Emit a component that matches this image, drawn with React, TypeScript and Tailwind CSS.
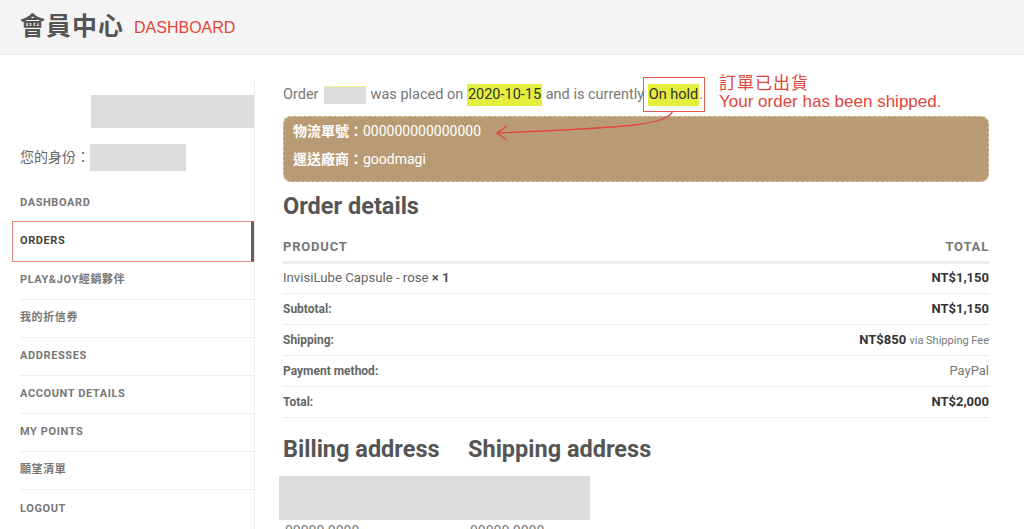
import React from "react";

const navItems = [
  "DASHBOARD",
  "ORDERS",
  "PLAY&JOY經銷夥伴",
  "我的折信券",
  "ADDRESSES",
  "ACCOUNT DETAILS",
  "MY POINTS",
  "願望清單",
  "LOGOUT",
];

const font = { fontFamily: 'Roboto, "Noto Sans CJK TC", sans-serif' };

export default function App() {
  return (
    <div className="w-[1024px] h-[529px] overflow-hidden bg-white text-[#777]" style={font}>
      <header className="h-[55px] bg-[#f5f4f4] border-b border-[#ebebeb] flex items-center pl-[20px]">
        <span className="text-[25px] font-bold text-[#555] tracking-[1px]">會員中心</span>
        <span className="ml-[10px] text-[16px] text-[#e0463a] mt-[1px]" style={{ fontFamily: '"Liberation Sans", sans-serif' }}>DASHBOARD</span>
      </header>
      <div className="flex">
        <aside className="w-[255px] shrink-0 pt-[25px]">
          <div className="border-r border-[#eee] h-[474px]">
            <div className="h-[15px]" />
            <div className="ml-[91px] h-[33px] bg-[#dcdcdc]" />
            <div className="flex items-center mt-[16px] pl-[20px] h-[27px]">
              <span className="text-[14px] text-[#666]">您的身份：</span>
              <span className="w-[96px] h-[27px] bg-[#dcdcdc]" />
            </div>
            <nav className="mt-[13px]">
              {navItems.map((item, i) =>
                item === "ORDERS" ? (
                  <div
                    key={item}
                    className="ml-[12px] h-[41px] border border-[#e8877e] border-r-[3px] border-r-[#6b5b5b] flex items-center pl-[7px] text-[11px] font-bold tracking-[0.6px] text-[#444] -mt-[1px]"
                  >
                    {item}
                  </div>
                ) : (
                  <div
                    key={item}
                    className={`ml-[20px] h-[38px] flex items-center text-[11px] font-bold tracking-[0.6px] text-[#777] ${i < navItems.length - 1 && navItems[i + 1] !== "ORDERS" ? "border-b border-[#eee]" : ""}`}
                  >
                    {item}
                  </div>
                )
              )}
            </nav>
          </div>
        </aside>
        <main className="relative flex-1 pl-[28px] pr-[35px] pt-[30px]">
          <div className="flex items-center h-[20px] text-[14.5px] text-[#777]">
            <span>Order</span>
            <span className="ml-[5px] mr-[5px] w-[42px] h-[18px] bg-[#dcdcdc] border-t border-[#f3f38a]" />
            <span>was placed on&nbsp;</span>
            <mark className="bg-[#e4ee3c] text-[#333] px-[1px]">2020-10-15</mark>
            <span>&nbsp;and is currently&nbsp;</span>
            <mark className="bg-[#e4ee3c] text-[#333] px-[1px]">On hold</mark>
            <span>.</span>
            <div className="absolute left-[388px] top-[22px] w-[62px] h-[35px] border border-[#e25c50]" />
            <div className="absolute left-[464px] top-[17px] text-[#e0463a] leading-[20px]" style={{ fontFamily: '"Noto Sans CJK TC", "Liberation Sans", sans-serif' }}>
              <div className="text-[17px] tracking-[1px]">訂單已出貨</div>
              <div className="text-[17px]" style={{ fontFamily: '"Liberation Sans", sans-serif' }}>Your order has been shipped.</div>
            </div>
          </div>
          <div className="mt-[11px] w-[706px] h-[66px] rounded-[8px] bg-[#b89b74] border border-dashed border-[#d9c7ac] pl-[9px] pt-0 text-white text-[14px] leading-[28px]">
            <div><span className="font-bold">物流單號：</span>000000000000000</div>
            <div><span className="font-bold">運送廠商：</span>goodmagi</div>
          </div>
          <svg className="absolute left-0 top-0 pointer-events-none" width="740" height="200">
            <path d="M418 56 C 410 70, 380 72, 243 78" fill="none" stroke="#e0463a" strokeWidth="1.3" />
            <path d="M252 71 L242 78 L252 85" fill="none" stroke="#e0463a" strokeWidth="1.3" />
          </svg>
          <h2 className="mt-[9px] text-[23.5px] font-bold text-[#555] leading-[30px]">Order details</h2>
          <table className="mt-[13px] w-[706px] border-collapse">
            <thead>
              <tr className="border-b-[3px] border-[#eee] h-[28px]">
                <th className="text-left text-[13px] font-bold tracking-[0.8px] text-[#777] align-top pt-[3px]">PRODUCT</th>
                <th className="text-right text-[13px] font-bold tracking-[0.8px] text-[#777] align-top pt-[3px]">TOTAL</th>
              </tr>
            </thead>
            <tbody>
              <tr className="border-b border-[#eee] h-[31px]">
                <td className="text-[13.2px] text-[#666]">InvisiLube Capsule - rose <strong className="text-[#555]">× 1</strong></td>
                <td className="text-right text-[13px] font-bold text-[#333]">NT$1,150</td>
              </tr>
              <tr className="border-b border-[#eee] h-[31px]">
                <td className="text-[12px] font-bold text-[#666]">Subtotal:</td>
                <td className="text-right text-[13px] font-bold text-[#333]">NT$1,150</td>
              </tr>
              <tr className="border-b border-[#eee] h-[31px]">
                <td className="text-[12px] font-bold text-[#666]">Shipping:</td>
                <td className="text-right text-[13px] text-[#333]"><strong>NT$850</strong> <span className="text-[11px] text-[#777]">via Shipping Fee</span></td>
              </tr>
              <tr className="border-b border-[#eee] h-[31px]">
                <td className="text-[12px] font-bold text-[#666]">Payment method:</td>
                <td className="text-right text-[13px] text-[#777]">PayPal</td>
              </tr>
              <tr className="border-b border-[#eee] h-[31px]">
                <td className="text-[12px] font-bold text-[#666]">Total:</td>
                <td className="text-right text-[13px] font-bold text-[#333]">NT$2,000</td>
              </tr>
            </tbody>
          </table>
          <div className="mt-[16px] flex text-[23.5px] font-bold text-[#555] leading-[30px]">
            <h2 className="w-[185px]">Billing address</h2>
            <h2>Shipping address</h2>
          </div>
          <div className="-ml-[4px] mt-[12px] w-[311px] h-[44px] bg-[#dcdcdc]" />
          <div className="flex text-[14px] text-[#777] mt-[1px]">
            <span className="ml-[2px] w-[185px]">00000 0000</span>
            <span>00000 0000</span>
          </div>
        </main>
      </div>
    </div>
  );
}
